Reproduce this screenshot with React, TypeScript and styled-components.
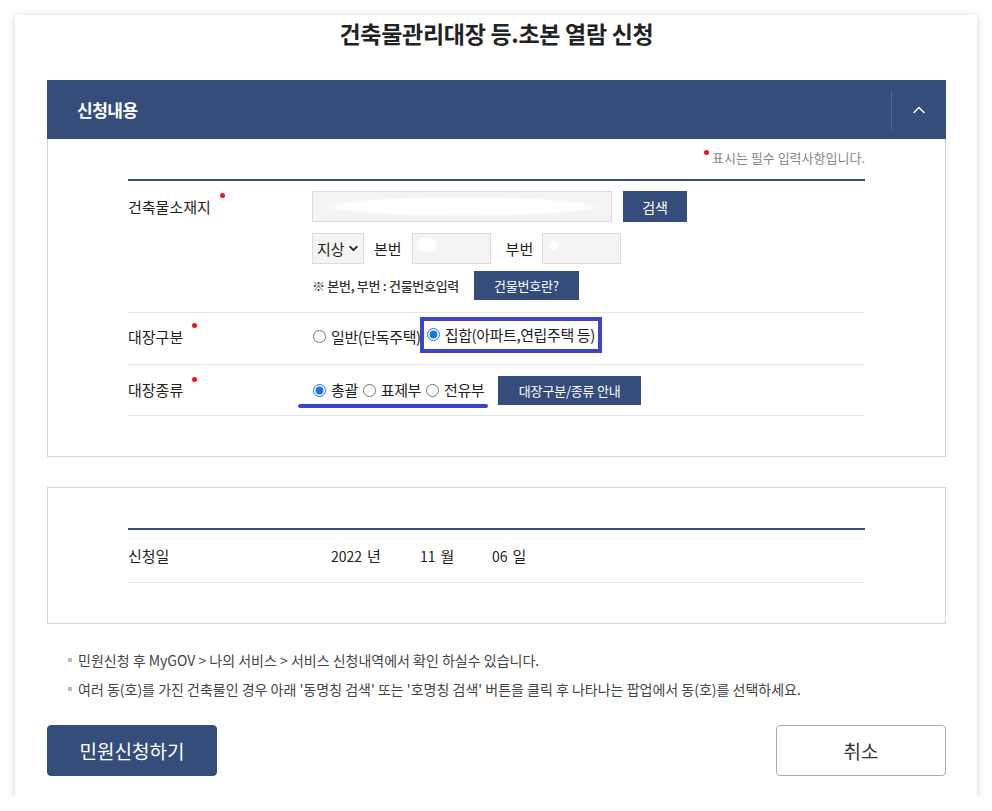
import React from 'react';
import styled, { createGlobalStyle } from 'styled-components';
import { ChevronUp, ChevronDown } from 'lucide-react';

const NAVY = '#344d7b';

const GlobalStyle = createGlobalStyle`
  html, body {
    margin: 0;
    padding: 0;
    background: #fff;
  }
  body {
    font-family: "Noto Sans CJK KR", "Noto Sans", sans-serif;
    color: #222;
  }
  * {
    box-sizing: border-box;
  }
`;

const Card = styled.div`
  margin: 15px 15px 0;
  width: 962px;
  padding: 0 31px 21px 32px;
  background: #fff;
  box-shadow: 0 1px 8px rgba(0, 0, 0, 0.16);
`;

const Title = styled.h1`
  margin: 0 0 29px;
  font-size: 23px;
  line-height: 36px;
  font-weight: 700;
  letter-spacing: -0.3px;
  text-align: center;
  color: #222;
`;

const PanelHeader = styled.div`
  display: flex;
  align-items: center;
  height: 59px;
  background: ${NAVY};
  padding-left: 30px;
`;

const PanelTitle = styled.h2`
  flex: 1;
  margin: 0;
  font-size: 17px;
  font-weight: 700;
  letter-spacing: -0.5px;
  color: #fff;
`;

const ToggleButton = styled.button`
  width: 55px;
  height: 40px;
  border: 0;
  border-left: 1px solid rgba(255, 255, 255, 0.15);
  background: transparent;
  color: #fff;
  display: flex;
  align-items: center;
  justify-content: center;
  padding: 0;
  cursor: pointer;
`;

const PanelBody = styled.div<{ $attached?: boolean }>`
  border: 1px solid #d5d5d5;
  border-top: ${(p) => (p.$attached ? '0' : '1px solid #d5d5d5')};
  padding: ${(p) => (p.$attached ? '9px 80px 40px' : '40px 80px 40px')};
`;

const RequiredNote = styled.p`
  margin: 0 0 11px;
  text-align: right;
  font-size: 13px;
  line-height: 20px;
  color: #888;
`;

const RedDot = styled.span`
  display: inline-block;
  width: 5px;
  height: 5px;
  border-radius: 50%;
  background: #e8161c;
  vertical-align: top;
  margin: 2px 3px 0 9px;
`;

const FormTable = styled.div`
  border-top: 2px solid ${NAVY};
`;

const Row = styled.div<{ $pad: string }>`
  display: grid;
  grid-template-columns: 184px 1fr;
  align-items: start;
  padding: ${(p) => p.$pad};
  border-bottom: 1px solid #e6e6e6;
`;

const Label = styled.div<{ $lh?: number }>`
  font-size: 15px;
  line-height: ${(p) => p.$lh ?? 31}px;
  color: #222;
`;

const FieldStack = styled.div`
  display: flex;
  flex-direction: column;
`;

const Line = styled.div<{ $gap?: number; $mt?: number }>`
  display: flex;
  align-items: center;
  gap: ${(p) => p.$gap ?? 11}px;
  margin-top: ${(p) => p.$mt ?? 0}px;
`;

const TextBox = styled.div<{ $w: number; $blot?: string }>`
  width: ${(p) => p.$w}px;
  height: 31px;
  border: 1px solid #dcdcdc;
  background: ${(p) => p.$blot || '#f4f4f4'};
`;

const NavyButton = styled.button<{ $w: number; $h: number; $size?: number }>`
  width: ${(p) => p.$w}px;
  height: ${(p) => p.$h}px;
  border: 0;
  padding: 0;
  background: ${NAVY};
  color: #fff;
  font-family: inherit;
  font-size: ${(p) => p.$size ?? 13}px;
  letter-spacing: -0.2px;
  cursor: pointer;
`;

const SelectBox = styled.div`
  width: 52px;
  height: 31px;
  border: 1px solid #dcdcdc;
  background: #f4f4f4;
  display: flex;
  align-items: center;
  gap: 2px;
  padding-left: 4px;
  font-size: 15px;
  color: #222;
`;

const InlineText = styled.span<{ $ml?: number }>`
  font-size: 15px;
  color: #222;
  margin-left: ${(p) => p.$ml ?? 0}px;
`;

const Hint = styled.span`
  font-size: 13px;
  font-weight: 500;
  color: #333;
  letter-spacing: -0.3px;
`;

const RadioGroup = styled.div<{ $underline?: boolean; $h: number }>`
  position: relative;
  display: flex;
  align-items: center;
  height: ${(p) => p.$h}px;
  &::after {
    content: '';
    display: ${(p) => (p.$underline ? 'block' : 'none')};
    position: absolute;
    left: -14px;
    right: -4px;
    bottom: -3px;
    height: 4px;
    border-radius: 2px;
    background: #3d44c8;
  }
`;

const RadioLabel = styled.label<{ $boxed?: boolean; $ml?: number }>`
  display: inline-flex;
  align-items: center;
  font-size: 15px;
  line-height: 24px;
  letter-spacing: -0.4px;
  color: #222;
  margin-left: ${(p) => p.$ml ?? 0}px;
  ${(p) =>
    p.$boxed &&
    `
    padding: 2px 3px 2px 2px;
    margin-top: -6px;
    margin-bottom: -2px;
    margin-right: -3px;
    outline: 4px solid #3d44c8;
  `}
  input {
    width: 13px;
    height: 13px;
    margin: 0 5px 0 1px;
    accent-color: #1a73e8;
  }
`;

const DateLine = styled.div`
  padding-left: 19px;
  line-height: 31px;
`;

const DateValue = styled.span<{ $w: number }>`
  display: inline-block;
  width: ${(p) => p.$w}px;
  font-size: 14px;
  color: #222;
  b {
    font-weight: 400;
    font-size: 15px;
    margin-left: 5px;
  }
`;

const Notes = styled.ul`
  list-style: none;
  margin: 26px 0 0;
  padding: 0 0 0 21px;
  display: flex;
  flex-direction: column;
  gap: 9px;
`;

const Note = styled.li`
  display: flex;
  align-items: center;
  gap: 6px;
  font-size: 14px;
  line-height: 20px;
  color: #444;
  &::before {
    content: '';
    width: 4px;
    height: 4px;
    background: #bbb;
  }
`;

const Actions = styled.div`
  display: flex;
  justify-content: space-between;
  margin-top: 26px;
`;

const BigButton = styled.button<{ $primary?: boolean }>`
  width: 170px;
  height: 51px;
  border-radius: 4px;
  border: 1px solid ${(p) => (p.$primary ? NAVY : '#aaa')};
  background: ${(p) => (p.$primary ? NAVY : '#fff')};
  color: ${(p) => (p.$primary ? '#fff' : '#333')};
  font-family: inherit;
  font-size: 19px;
  font-weight: 400;
  cursor: pointer;
`;

const Gap = styled.div<{ $h: number }>`
  height: ${(p) => p.$h}px;
`;

export default function App() {
  return (
    <>
      <GlobalStyle />
      <Card>
        <Title>건축물관리대장 등.초본 열람 신청</Title>

        <PanelHeader>
          <PanelTitle>신청내용</PanelTitle>
          <ToggleButton aria-label="접기">
            <ChevronUp size={20} strokeWidth={1.8} />
          </ToggleButton>
        </PanelHeader>
        <PanelBody $attached>
          <RequiredNote>
            <RedDot />
            표시는 필수 입력사항입니다.
          </RequiredNote>
          <FormTable>
            <Row $pad="10px 0 12px">
              <Label>
                건축물소재지
                <RedDot />
              </Label>
              <FieldStack>
                <Line>
                  <TextBox
                    $w={300}
                    $blot="radial-gradient(ellipse 48% 34% at 50% 50%, #fff 80%, #f4f4f4 100%)"
                  />
                  <NavyButton $w={64} $h={31} $size={14}>
                    검색
                  </NavyButton>
                </Line>
                <Line $gap={0} $mt={11}>
                  <SelectBox>
                    지상
                    <ChevronDown size={13} strokeWidth={3.5} />
                  </SelectBox>
                  <InlineText $ml={10}>본번</InlineText>
                  <InlineText $ml={10} as="div">
                    <TextBox
                      $w={79}
                      $blot="radial-gradient(ellipse 14% 28% at 18% 38%, #fff 85%, #f4f4f4 100%)"
                    />
                  </InlineText>
                  <InlineText $ml={15}>부번</InlineText>
                  <InlineText $ml={9} as="div">
                    <TextBox
                      $w={79}
                      $blot="radial-gradient(ellipse 6% 16% at 14% 40%, #fff 85%, #f4f4f4 100%)"
                    />
                  </InlineText>
                </Line>
                <Line $gap={15} $mt={7}>
                  <Hint>※ 본번, 부번 : 건물번호입력</Hint>
                  <NavyButton $w={105} $h={29}>
                    건물번호란?
                  </NavyButton>
                </Line>
              </FieldStack>
            </Row>

            <Row $pad="8px 0 12px">
              <Label>
                대장구분
                <RedDot />
              </Label>
              <RadioGroup $h={31}>
                <RadioLabel>
                  <input type="radio" name="kind" />
                  일반(단독주택)
                </RadioLabel>
                <RadioLabel $boxed $ml={3}>
                  <input type="radio" name="kind" defaultChecked />
                  집합(아파트,연립주택 등)
                </RadioLabel>
              </RadioGroup>
            </Row>

            <Row $pad="10px 0 10px">
              <Label $lh={30}>
                대장종류
                <RedDot />
              </Label>
              <Line $gap={14}>
                <RadioGroup $underline $h={30}>
                  <RadioLabel>
                    <input type="radio" name="type" defaultChecked />
                    총괄
                  </RadioLabel>
                  <RadioLabel $ml={4}>
                    <input type="radio" name="type" />
                    표제부
                  </RadioLabel>
                  <RadioLabel $ml={4}>
                    <input type="radio" name="type" />
                    전유부
                  </RadioLabel>
                </RadioGroup>
                <NavyButton $w={143} $h={29}>
                  대장구분/종류 안내
                </NavyButton>
              </Line>
            </Row>
          </FormTable>
        </PanelBody>

        <Gap $h={30} />

        <PanelBody>
          <FormTable>
            <Row $pad="10px 0 10px">
              <Label>신청일</Label>
              <DateLine>
                <DateValue $w={89}>
                  2022<b>년</b>
                </DateValue>
                <DateValue $w={72}>
                  11<b>월</b>
                </DateValue>
                <DateValue $w={40}>
                  06<b>일</b>
                </DateValue>
              </DateLine>
            </Row>
          </FormTable>
        </PanelBody>

        <Notes>
          <Note>민원신청 후 MyGOV &gt; 나의 서비스 &gt; 서비스 신청내역에서 확인 하실수 있습니다.</Note>
          <Note>
            여러 동(호)를 가진 건축물인 경우 아래 '동명칭 검색' 또는 '호명칭 검색' 버튼을 클릭 후 나타나는 팝업에서 동(호)를 선택하세요.
          </Note>
        </Notes>

        <Actions>
          <BigButton $primary>민원신청하기</BigButton>
          <BigButton>취소</BigButton>
        </Actions>
      </Card>
    </>
  );
}
